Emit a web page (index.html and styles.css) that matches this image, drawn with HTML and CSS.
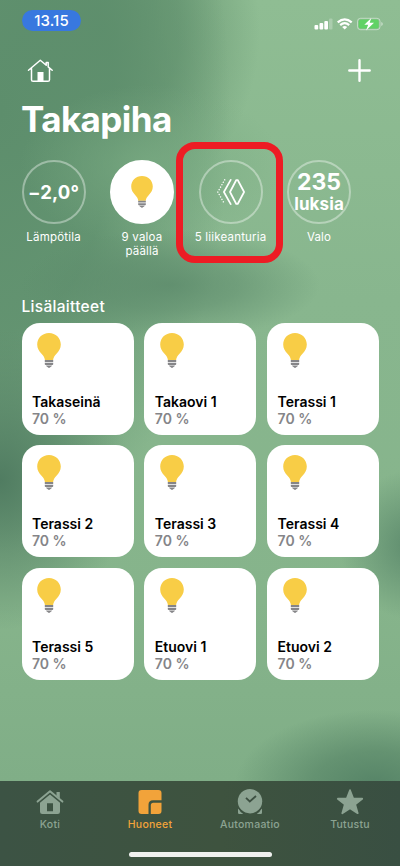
FILE: index.html
```html
<!DOCTYPE html>
<html lang="fi">
<head>
<meta charset="utf-8">
<meta name="viewport" content="width=device-width">
<title>Takapiha</title>
<link rel="stylesheet" href="styles.css">
</head>
<body>
<svg class="defs" aria-hidden="true">
  <symbol id="bulb" viewBox="0 0 24 35">
    <path fill="#f8cd46" d="M12 0C5.300 0 .2 5.100.2 11.500c0 4 1.800 6.500 4.300 9.200 2 2.200 3.200 4 3.400 6.300h8.200c.2-2.300 1.400-4.100 3.400-6.300 2.500-2.700 4.300-5.200 4.300-9.200C23.800 5.100 18.700 0 12 0z"/>
    <path fill="#858588" d="M7.800 27h8.400v2.100H7.800zM7.800 29.800h8.400v1.500q0 .7-.8.700H8.600q-.8 0-.8-.7zM9 32.600h6q-.5 1.200-1.600 1.300-.5.900-1.400.9t-1.400-.9Q9.500 33.800 9 32.600z"/>
  </symbol>
</svg>
<div class="screen">
  <header class="status">
    <span class="time">13.15</span>
    <svg class="indicators" viewBox="0 0 70 14">
      <g fill="#fff"><rect x="0.500" y="8" width="3.700" height="4.500" rx="1"/><rect x="5.500" y="6" width="3.700" height="6.500" rx="1"/><rect x="10.300" y="4" width="3.700" height="8.500" rx="1"/><rect x="15" y="1.500" width="3.500" height="11" rx="1" opacity=".25"/></g>
      <g fill="none" stroke="#fff" stroke-width="2.200"><path d="M23.700 5.300q7-6 14 0"/><path d="M26.200 8.100q4.500-3.800 9 0"/></g>
      <path fill="#fff" d="M28.200 10q2.500-1.900 5 0l-2.500 2.600z"/>
      <rect x="43.500" y="1.300" width="22.500" height="11.400" rx="3" fill="none" stroke="#fff" stroke-opacity=".45"/>
      <rect x="44.700" y="2.500" width="20" height="9" rx="2" fill="#61d265"/>
      <path d="M67.200 5q1.700.5 1.700 2t-1.700 2z" fill="#fff" opacity=".45"/>
      <path d="M57.300 1l-7 6.800h3.900L52 13.500l8-7.700h-4.300z" fill="#fff"/>
    </svg>
  </header>
  <nav class="toolbar">
    <svg class="home" viewBox="0 0 26 24" fill="none" stroke="#fff" stroke-width="1.500" stroke-linecap="round" stroke-linejoin="round"><path d="M1 11.200L12.800 1.200l5.900 5V3.500h2v4.400l4 3.400M4 9.300v11.400q0 1.600 1.600 1.600h14.800q1.600 0 1.600-1.600V9.300"/><path d="M10 13h6v9h-6z" fill="#fff" stroke="none"/></svg>
    <svg class="plus" viewBox="0 0 23 23" stroke="#fff" stroke-width="2.400" stroke-linecap="round"><path d="M11.500 1.300v20.400M1.300 11.500h20.400"/></svg>
  </nav>
  <h1>Takapiha</h1>
  <section class="sensors">
    <div class="sensor"><div class="ring temp">−2,0°</div><p>Lämpötila</p></div>
    <div class="sensor"><div class="ring lit"><svg class="ring-bulb"><use href="#bulb"/></svg></div><p>9 valoa päällä</p></div>
    <div class="sensor marked"><div class="ring">
      <svg class="motion" viewBox="0 0 30 28" fill="none" stroke="#fff" stroke-width="1.700" stroke-linecap="round" stroke-linejoin="round"><path d="M20.300 2h1.400l6.400 12-6.400 12h-1.400L14 14z"/><path d="M14.700 1.800L7.900 14l6.800 12.200"/><path d="M8.700 1.800L1.800 14l6.900 12.200" stroke-width="1.500" stroke-dasharray=".01 2.800"/></svg>
    </div><p>5 liikeanturia</p></div>
    <div class="sensor"><div class="ring lux"><b>235</b><span>luksia</span></div><p>Valo</p></div>
  </section>
  <h2>Lisälaitteet</h2>
  <section class="grid">
    <article class="card"><svg><use href="#bulb"/></svg><h3>Takaseinä</h3><p>70 %</p></article>
    <article class="card"><svg><use href="#bulb"/></svg><h3>Takaovi 1</h3><p>70 %</p></article>
    <article class="card"><svg><use href="#bulb"/></svg><h3>Terassi 1</h3><p>70 %</p></article>
    <article class="card"><svg><use href="#bulb"/></svg><h3>Terassi 2</h3><p>70 %</p></article>
    <article class="card"><svg><use href="#bulb"/></svg><h3>Terassi 3</h3><p>70 %</p></article>
    <article class="card"><svg><use href="#bulb"/></svg><h3>Terassi 4</h3><p>70 %</p></article>
    <article class="card"><svg><use href="#bulb"/></svg><h3>Terassi 5</h3><p>70 %</p></article>
    <article class="card"><svg><use href="#bulb"/></svg><h3>Etuovi 1</h3><p>70 %</p></article>
    <article class="card"><svg><use href="#bulb"/></svg><h3>Etuovi 2</h3><p>70 %</p></article>
  </section>
  <footer class="tabbar">
    <div class="tabs">
      <div class="tab"><svg viewBox="0 0 28 26"><path fill="none" stroke="currentColor" stroke-width="2" stroke-linecap="round" stroke-linejoin="round" d="M1.600 12.600L14 2.200l12.400 10.400"/><path fill="currentColor" d="M20.500 3h3.300v6.500l-3.300-2.800zM14 5.400l10 8.300v9q0 2.300-2.300 2.300H6.300Q4 25 4 22.700v-9zM11 14.200v8h6v-8z" fill-rule="evenodd"/></svg><span>Koti</span></div>
      <div class="tab active"><svg viewBox="0 0 28 26"><path fill="currentColor" d="M5.500 1h17q3 0 3 3v7.300H17q-4.500 0-4.500 4.500V25h-7q-3 0-3-3V4q0-3 3-3zM14.800 25v-8.700q0-2.500 2.500-2.500h8.200V22q0 3-3 3z"/></svg><span>Huoneet</span></div>
      <div class="tab"><svg viewBox="0 0 28 26"><circle cx="14" cy="12.200" r="12.200" fill="currentColor"/><path fill="currentColor" d="M2.300 19.500q1.800 3.500 5 5.500H3.300Q2 25 2 23.700v-3zM25.700 19.500q-1.800 3.500-5 5.500h4q1.300 0 1.300-1.300v-3z"/><path d="M2.700 18.800q2.200 4 5.800 6.200M25.300 18.800q-2.200 4-5.800 6.200" fill="none" stroke="#3d5042" stroke-width="1"/><path d="M10 8.800l3.800 3.700L20 7" fill="none" stroke="#3d5042" stroke-width="1.800"/></svg><span>Automaatio</span></div>
      <div class="tab"><svg viewBox="0 0 28 26"><path fill="currentColor" stroke="currentColor" stroke-width="1.800" stroke-linejoin="round" d="M14 1.200l3.200 8.300 9 .2-7 5.700 2.500 8.800L14 19.300l-7.700 4.900 2.500-8.800-7-5.700 9-.2z"/></svg><span>Tutustu</span></div>
    </div>
    <div class="handle"></div>
  </footer>
</div>
</body>
</html>
```
FILE: styles.css
```css
*, *::after { box-sizing: border-box; margin: 0; padding: 0; }
body { font-family: Inter, "Liberation Sans", sans-serif; color: #fff; }
svg { display: block; }
.defs { display: none; }
.screen {
  width: 400px;
  height: 866px;
  display: flex;
  flex-direction: column;
  overflow: hidden;
  background:
    radial-gradient(ellipse 140px 75px at 375px 785px, #568467 0%, #5a8869bb 45%, #5c8a6b00 100%),
    radial-gradient(ellipse 75px 75px at 415px 545px, #5c8a6c 0%, #5c8a6c00 100%),
    radial-gradient(ellipse 130px 150px at 0 480px, #507c61 0%, #507c61aa 35%, #507c6100 100%),
    radial-gradient(ellipse 150px 55px at 170px 285px, #5b896acc 0%, #5b896a88 45%, #5b896a00 100%),
    radial-gradient(ellipse 130px 80px at 150px 165px, #79aa82cc 0%, #79aa8200 100%),
    radial-gradient(ellipse 230px 440px at 0 110px, #5d8e6c 0%, #5d8e6cdd 50%, #5d8e6c00 100%),
    radial-gradient(ellipse 160px 190px at 100px 30px, #64936f 0%, #64936fbb 50%, #64936f00 100%),
    linear-gradient(180deg, #8fbd93 0, #88b68e 300px, #86b48b 600px, #80ae87 781px);
}
.status { height: 44px; padding: 10px 16px 0 22px; display: flex; justify-content: space-between; }
.time { width: 59px; height: 21px; border-radius: 11px; background: #3878df; font-size: 15px; font-weight: 500; line-height: 22px; text-align: center; letter-spacing: .1px; }
.indicators { width: 70px; height: 14px; margin-top: 7px; }
.toolbar { height: 56px; padding: 15px 29px 0 27px; display: flex; justify-content: space-between; }
.home { width: 27px; height: 24px; }
.plus { width: 23px; height: 23px; }
h1 { height: 60px; padding-left: 21px; font-size: 35px; line-height: 39px; font-weight: 700; letter-spacing: -.6px; }
.sensors { height: 134px; padding-left: 9.300px; display: flex; }
.sensor { width: 88.500px; display: flex; flex-direction: column; align-items: center; position: relative; }
.sensor p { margin-top: 6px; width: 76px; font-size: 11.500px; line-height: 14px; text-align: center; letter-spacing: .2px; }
.sensor.marked p { white-space: nowrap; width: auto; }
.marked::after { content: ""; position: absolute; left: -10px; top: -18px; width: 107px; height: 121px; border: 7px solid #ed1c24; border-radius: 19px; }
.ring { width: 64px; height: 64px; flex: none; border: 2px solid #ffffff60; border-radius: 50%; display: flex; flex-direction: column; align-items: center; justify-content: center; white-space: nowrap; }
.lit { background: #fff; border-color: #fff; }
.ring-bulb { width: 22px; height: 32px; }
.temp { font-size: 18.500px; font-weight: 700; letter-spacing: .1px; }
.motion { width: 30px; height: 28px; }
.lux b { font-size: 23px; line-height: 24px; font-weight: 700; letter-spacing: 0; }
.lux span { font-size: 17px; line-height: 21px; font-weight: 700; letter-spacing: .1px; }
h2 { height: 28.500px; padding-left: 21.500px; font-size: 15.500px; line-height: 25px; font-weight: 500; letter-spacing: .3px; }
.grid { padding: 0 21.500px; display: grid; grid-template-columns: repeat(3, 112px); gap: 10.800px; }
.card { height: 112px; background: #fff; border-radius: 18px; padding: 10px 10.500px; }
.card svg { width: 24px; height: 35px; margin: 0 0 25px 5px; }
.card h3 { color: #000; font-size: 14px; line-height: 17px; font-weight: 600; white-space: nowrap; }
.card p { color: #858588; font-size: 14px; line-height: 18px; font-weight: 600; }
.tabbar { margin-top: auto; height: 85px; flex: none; background: linear-gradient(90deg, #3c5344, #3e533f 55%, #394f42); display: flex; flex-direction: column; align-items: center; }
.tabs { width: 400px; height: 71px; display: flex; }
.tab { width: 100px; padding-top: 8px; display: flex; flex-direction: column; align-items: center; gap: 3px; color: #8ca392; font-size: 10.500px; line-height: 14px; font-weight: 500; letter-spacing: .25px; }
.tab svg { width: 28px; height: 26px; }
.active { color: #f2a33a; }
.handle { width: 143px; height: 5px; border-radius: 3px; background: #f0f1ef; }
```
